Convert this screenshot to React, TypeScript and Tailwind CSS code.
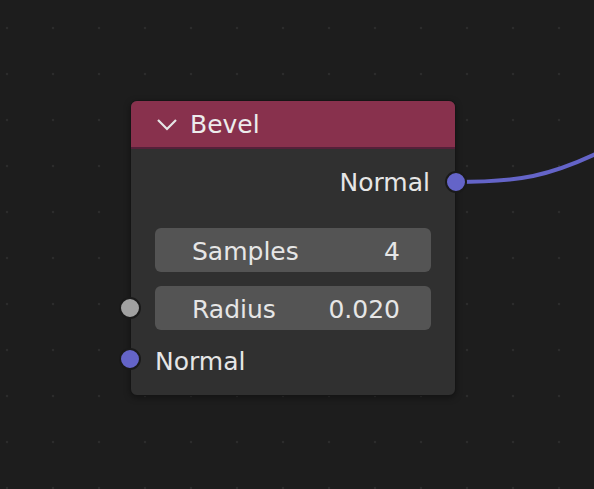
import React from "react";

function Socket({ color, className }: { color: string; className: string }) {
  return (
    <div
      className={`absolute w-[22px] h-[22px] rounded-full border-[2px] border-[#1a1a1a] ${color} ${className}`}
    ></div>
  );
}

function Field({ label, value }: { label: string; value: string }) {
  return (
    <div className="h-[44px] rounded-[6px] bg-[#545454] flex items-center justify-between pl-[37px] pr-[31px] pt-[3px] text-[#e6e6e6]">
      <span>{label}</span>
      <span>{value}</span>
    </div>
  );
}

export default function App() {
  return (
    <div
      className="relative w-[594px] h-[489px] overflow-hidden bg-[#1d1d1d] bg-[radial-gradient(circle,#2c2c2c_1.2px,transparent_1.6px)] bg-[size:46px_46px] bg-[position:-16px_5px] pt-[100px] pl-[130px] text-[25px] leading-none"
      style={{ fontFamily: '"DejaVu Sans", sans-serif' }}
    >
      <svg className="absolute left-0 top-0" width="594" height="489">
        <path d="M455 182 C 520 182, 550 176, 600 152" stroke="#6464c8" strokeWidth="4" fill="none" />
      </svg>
      <div className="relative w-[326px] rounded-[7px] border border-[#151515] bg-[#303030] shadow-[0_2px_6px_rgba(0,0,0,0.35)]">
        <div className="h-[48px] rounded-t-[6px] bg-[#88314d] border-b-[2px] border-[#55203a] flex items-center pl-[25px] text-[#ececec]">
          <svg width="22" height="14" viewBox="0 0 22 14" className="mt-[1px]">
            <polyline points="2,2 11,11 20,2" stroke="#e6e6e6" strokeWidth="2.2" fill="none" />
          </svg>
          <span className="ml-[12px]">Bevel</span>
        </div>
        <div className="pt-[11px] pb-[13px]">
          <div className="relative h-[44px] flex items-center justify-end pr-[25px] text-[#e6e6e6]">
            <span>Normal</span>
            <Socket color="bg-[#6464c8]" className="right-[-12px] top-[11px]" />
          </div>
          <div className="mt-[24px] pl-[24px] pr-[24px] flex flex-col gap-[14px]">
            <Field label="Samples" value="4" />
            <div className="relative">
              <Socket color="bg-[#a1a1a1]" className="left-[-36px] top-[11px]" />
              <Field label="Radius" value="0.020" />
            </div>
          </div>
          <div className="relative mt-[8px] h-[44px] flex items-center pl-[24px] pt-[2px] text-[#e6e6e6]">
            <span>Normal</span>
            <Socket color="bg-[#6464c8]" className="left-[-12px] top-[10px]" />
          </div>
        </div>
      </div>
    </div>
  );
}
